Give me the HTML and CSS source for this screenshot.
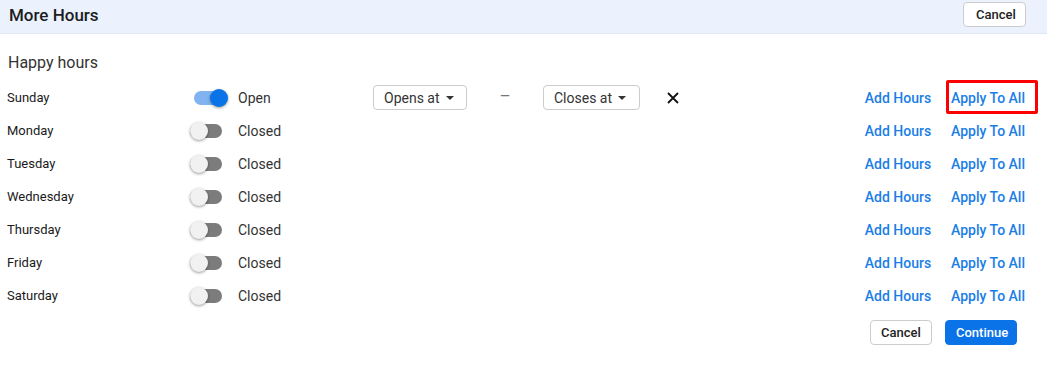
FILE: index.html
```html
<!DOCTYPE html>
<html lang="en">
<head>
    <meta charset="UTF-8">
    <meta name="viewport" content="width=device-width, initial-scale=1.0">
    <title>More Hours</title>
    <link rel="stylesheet" href="styles.css">
</head>
<body>
    <div class="header">
        <h1>More Hours</h1>
        <button class="btn">Cancel</button>
    </div>
    <div class="content">
        <h2>Happy hours</h2>
        <div class="days">
            <div class="row">
                <span class="day">Sunday</span>
                <span class="switch on"><span class="thumb"></span></span>
                <span class="status">Open</span>
                <div class="times">
                    <button class="btn drop">Opens at <span class="caret"></span></button>
                    <span class="dash">&ndash;</span>
                    <button class="btn drop">Closes at <span class="caret"></span></button>
                    <span class="remove">
                        <svg width="12" height="12" viewBox="0 0 12 12"><path d="M1 1L11 11M11 1L1 11" stroke="#111" stroke-width="1.8"/></svg>
                    </span>
                </div>
                <div class="actions">
                    <a href="#">Add Hours</a>
                    <a href="#" class="marked">Apply To All</a>
                </div>
            </div>
            <div class="row">
                <span class="day">Monday</span>
                <span class="switch"><span class="thumb"></span></span>
                <span class="status">Closed</span>
                <div class="times"></div>
                <div class="actions"><a href="#">Add Hours</a><a href="#">Apply To All</a></div>
            </div>
            <div class="row">
                <span class="day">Tuesday</span>
                <span class="switch"><span class="thumb"></span></span>
                <span class="status">Closed</span>
                <div class="times"></div>
                <div class="actions"><a href="#">Add Hours</a><a href="#">Apply To All</a></div>
            </div>
            <div class="row">
                <span class="day">Wednesday</span>
                <span class="switch"><span class="thumb"></span></span>
                <span class="status">Closed</span>
                <div class="times"></div>
                <div class="actions"><a href="#">Add Hours</a><a href="#">Apply To All</a></div>
            </div>
            <div class="row">
                <span class="day">Thursday</span>
                <span class="switch"><span class="thumb"></span></span>
                <span class="status">Closed</span>
                <div class="times"></div>
                <div class="actions"><a href="#">Add Hours</a><a href="#">Apply To All</a></div>
            </div>
            <div class="row">
                <span class="day">Friday</span>
                <span class="switch"><span class="thumb"></span></span>
                <span class="status">Closed</span>
                <div class="times"></div>
                <div class="actions"><a href="#">Add Hours</a><a href="#">Apply To All</a></div>
            </div>
            <div class="row">
                <span class="day">Saturday</span>
                <span class="switch"><span class="thumb"></span></span>
                <span class="status">Closed</span>
                <div class="times"></div>
                <div class="actions"><a href="#">Add Hours</a><a href="#">Apply To All</a></div>
            </div>
        </div>
        <div class="footer">
            <button class="btn">Cancel</button>
            <button class="btn primary">Continue</button>
        </div>
    </div>
</body>
</html>
```

FILE: styles.css
```css
body {
    font-family: Roboto, "Liberation Sans", Arial, sans-serif;
    background-color: #fff;
    color: #333;
    margin: 0;
    padding: 0;
}
.header {
    height: 34px;
    background-color: #ebf2fd;
    border-bottom: 1px solid #e1e7ef;
    display: flex;
    align-items: center;
    justify-content: space-between;
    padding: 0 21px 0 9px;
    box-sizing: border-box;
}
.header h1 {
    margin: 0;
    font-size: 17px;
    font-weight: 500;
    color: #1d1d1d;
    position: relative;
    top: -2px;
}
.header .btn {
    position: relative;
    top: -2px;
    width: 63px;
}
.btn {
    font-family: inherit;
    font-size: 13px;
    font-weight: 500;
    color: #222;
    background: #fff;
    border: 1px solid #ccc;
    border-radius: 4px;
    height: 25px;
    padding: 0 12px;
    cursor: pointer;
}
.content {
    padding: 19px 22px 0 7px;
}
h2 {
    margin: 0 0 9px 1px;
    font-size: 16px;
    font-weight: 400;
    color: #333;
}
.row {
    display: grid;
    grid-template-columns: 183px 48px 135px auto 1fr auto;
    align-items: center;
    height: 33px;
}
.day {
    font-size: 13px;
    font-weight: 400;
    color: #1a1a1a;
}
.switch {
    position: relative;
    display: block;
    width: 32px;
    height: 14px;
    border-radius: 7px;
    background-color: #7c7c7c;
}
.switch .thumb {
    position: absolute;
    top: -2px;
    left: 0;
    width: 18px;
    height: 18px;
    border-radius: 50%;
    background-color: #f1f1f1;
    box-shadow: 0 1px 3px rgba(0, 0, 0, 0.4);
}
.switch.on {
    margin-left: 4px;
    background-color: #80b3ef;
}
.switch.on .thumb {
    left: auto;
    right: -2px;
    background-color: #0a73e8;
}
.status {
    font-size: 14px;
    color: #333;
}
.times {
    display: flex;
    align-items: center;
}
.drop {
    font-weight: 400;
    font-size: 14px;
    color: #333;
    padding: 0 10px;
    display: flex;
    align-items: center;
    gap: 6px;
}
.times .drop:first-child {
    width: 94px;
}
.times .drop:nth-child(3) {
    width: 97px;
}
.caret {
    width: 0;
    height: 0;
    border-left: 4px solid transparent;
    border-right: 4px solid transparent;
    border-top: 4px solid #333;
}
.dash {
    width: 76px;
    text-align: center;
    color: #777;
    font-size: 17px;
    position: relative;
    top: -2px;
}
.remove {
    display: flex;
    margin-left: 27px;
}
.actions {
    grid-column: 6;
    display: flex;
    gap: 20px;
}
.actions a {
    color: #1a7ee6;
    font-size: 14px;
    font-weight: 500;
    text-decoration: none;
}
.marked {
    position: relative;
}
.marked::after {
    content: "";
    position: absolute;
    left: -5px;
    right: -13px;
    top: -10px;
    bottom: -8px;
    border: 3px solid #f00;
    border-radius: 2px;
}
.footer {
    display: flex;
    justify-content: flex-end;
    gap: 13px;
    padding: 8px 8px 0 0;
}
.footer .btn {
    padding: 0 10px;
}
.footer .btn:first-child {
    width: 62px;
}
.primary {
    background-color: #0a73e8;
    border-color: #0a73e8;
    color: #fff;
    width: 72px;
}
```
